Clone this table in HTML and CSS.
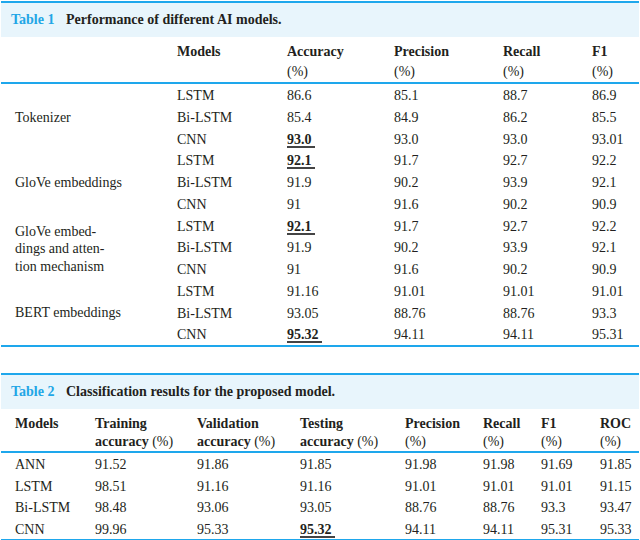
FILE: index.html
```html
<!DOCTYPE html>
<html>
<head>
<meta charset="utf-8">
<link rel="stylesheet" href="styles.css">
</head>
<body>
<div class="page">
  <div class="tbl t1">
    <div class="caption"><span class="cap-num">Table 1</span><span class="cap-text">Performance of different AI models.</span></div>
    <table>
      <colgroup>
        <col style="width:176px"><col style="width:110px"><col style="width:107px"><col style="width:109px"><col style="width:89px"><col>
      </colgroup>
      <thead>
        <tr><th></th><th>Models</th><th>Accuracy<br><span class="pct">(%)</span></th><th>Precision<br><span class="pct">(%)</span></th><th>Recall<br><span class="pct">(%)</span></th><th>F1<br><span class="pct">(%)</span></th></tr>
      </thead>
      <tbody>
        <tr><td class="grp" rowspan="3">Tokenizer</td><td>LSTM</td><td>86.6</td><td>85.1</td><td>88.7</td><td>86.9</td></tr>
        <tr><td>Bi-LSTM</td><td>85.4</td><td>84.9</td><td>86.2</td><td>85.5</td></tr>
        <tr><td>CNN</td><td><span class="best">93.0&nbsp;</span></td><td>93.0</td><td>93.0</td><td>93.01</td></tr>
        <tr><td class="grp" rowspan="3">GloVe embeddings</td><td>LSTM</td><td><span class="best">92.1&nbsp;</span></td><td>91.7</td><td>92.7</td><td>92.2</td></tr>
        <tr><td>Bi-LSTM</td><td>91.9</td><td>90.2</td><td>93.9</td><td>92.1</td></tr>
        <tr><td>CNN</td><td>91</td><td>91.6</td><td>90.2</td><td>90.9</td></tr>
        <tr><td class="grp ml" rowspan="3">GloVe embed-<br>dings and atten-<br>tion mechanism</td><td>LSTM</td><td><span class="best">92.1&nbsp;</span></td><td>91.7</td><td>92.7</td><td>92.2</td></tr>
        <tr><td>Bi-LSTM</td><td>91.9</td><td>90.2</td><td>93.9</td><td>92.1</td></tr>
        <tr><td>CNN</td><td>91</td><td>91.6</td><td>90.2</td><td>90.9</td></tr>
        <tr><td class="grp" rowspan="3">BERT embeddings</td><td>LSTM</td><td>91.16</td><td>91.01</td><td>91.01</td><td>91.01</td></tr>
        <tr><td>Bi-LSTM</td><td>93.05</td><td>88.76</td><td>88.76</td><td>93.3</td></tr>
        <tr><td>CNN</td><td><span class="best">95.32&nbsp;</span></td><td>94.11</td><td>94.11</td><td>95.31</td></tr>
      </tbody>
    </table>
  </div>

  <div class="tbl t2">
    <div class="caption"><span class="cap-num">Table 2</span><span class="cap-text">Classification results for the proposed model.</span></div>
    <table>
      <colgroup>
        <col style="width:94px"><col style="width:102px"><col style="width:103px"><col style="width:105px"><col style="width:78px"><col style="width:58px"><col style="width:59px"><col>
      </colgroup>
      <thead>
        <tr><th class="first">Models</th><th>Training<br>accuracy <span class="pct">(%)</span></th><th>Validation<br>accuracy <span class="pct">(%)</span></th><th>Testing<br>accuracy <span class="pct">(%)</span></th><th>Precision<br><span class="pct">(%)</span></th><th>Recall<br><span class="pct">(%)</span></th><th>F1<br><span class="pct">(%)</span></th><th>ROC<br><span class="pct">(%)</span></th></tr>
      </thead>
      <tbody>
        <tr><td class="first">ANN</td><td>91.52</td><td>91.86</td><td>91.85</td><td>91.98</td><td>91.98</td><td>91.69</td><td>91.85</td></tr>
        <tr><td class="first">LSTM</td><td>98.51</td><td>91.16</td><td>91.16</td><td>91.01</td><td>91.01</td><td>91.01</td><td>91.15</td></tr>
        <tr><td class="first">Bi-LSTM</td><td>98.48</td><td>93.06</td><td>93.05</td><td>88.76</td><td>88.76</td><td>93.3</td><td>93.47</td></tr>
        <tr><td class="first">CNN</td><td>99.96</td><td>95.33</td><td><span class="best">95.32&nbsp;</span></td><td>94.11</td><td>94.11</td><td>95.31</td><td>95.33</td></tr>
      </tbody>
    </table>
  </div>
</div>
</body>
</html>
```

FILE: styles.css
```css
html, body {
  margin: 0;
  padding: 0;
  background: #ffffff;
}
body {
  font-family: "Liberation Serif", "DejaVu Serif", serif;
  font-size: 14px;
  color: #231f20;
}
.page {
  padding: 1px 1px 0 1px;
  width: 638px;
}
.tbl {
  border-top: 2px solid #1ea7ec;
  border-bottom: 2px solid #1ea7ec;
}
.t2 {
  margin-top: 26px;
}
.caption {
  background: #e8f5fc;
  height: 34px;
  display: flex;
  align-items: center;
  padding-left: 10px;
  font-weight: bold;
  font-size: 14px;
}
.cap-num {
  color: #22a6e6;
  width: 55px;
  flex: none;
}
.cap-text {
  color: #231f20;
}
table {
  width: 638px;
  border-collapse: separate;
  border-spacing: 0;
  table-layout: fixed;
}
thead tr {
  height: 45px;
}
.t2 thead tr {
  height: 44px;
}
thead th {
  text-align: left;
  font-weight: bold;
  vertical-align: top;
  padding: 5px 0 0 0;
  line-height: 20px;
  border-bottom: 2px solid #1ea7ec;
}
.t2 thead th {
  line-height: 18px;
  padding-top: 5.5px;
}
.pct {
  font-weight: normal;
}
tbody tr {
  height: 21.75px;
}
.t2 tbody tr {
  height: 21.5px;
}
td {
  padding: 3px 0 0 0;
  line-height: 18px;
  vertical-align: top;
  text-align: left;
  white-space: nowrap;
}
td.grp {
  vertical-align: middle;
  padding: 2px 0 0 14px;
}
td.ml {
  line-height: 17.5px;
  padding-top: 4px;
}
.first {
  padding-left: 14px;
}
.best {
  font-weight: bold;
  text-decoration: underline;
  text-decoration-thickness: 1.5px;
  text-underline-offset: 2px;
  text-decoration-color: #444;
}
```
